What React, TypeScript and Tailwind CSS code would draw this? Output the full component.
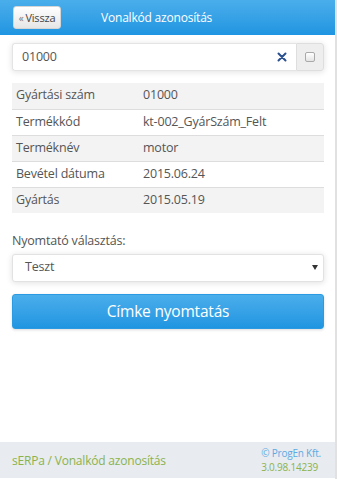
import React from 'react';

const rows: [string, string][] = [
    ['Gyártási szám', '01000'],
    ['Termékkód', 'kt-002_GyárSzám_Felt'],
    ['Terméknév', 'motor'],
    ['Bevétel dátuma', '2015.06.24'],
    ['Gyártás', '2015.05.19'],
];

export default function App() {
    return (
        <div
            className="w-[337px] h-[479px] flex flex-col bg-white border-r-2 border-[#e1e1e1] text-[#555] tracking-[-0.2px]"
            style={{ fontFamily: '"Open Sans", "Noto Sans", sans-serif' }}
        >
            <header className="h-[35px] flex items-center bg-gradient-to-b from-[#4aaeeb] to-[#1e95e1] pl-[13px]">
                <button className="h-[23px] w-[48px] rounded-[3px] border border-[#d5d5d5] bg-gradient-to-b from-white to-[#e6e6e6] text-[11px] text-[#444] flex items-center justify-center leading-none">
                    <span className="text-[10px] mr-[2px] text-[#777]">«</span>Vissza
                </button>
                <h1 className="ml-[40px] text-[12px] text-white font-normal">Vonalkód azonosítás</h1>
            </header>

            <div className="px-[12px] pr-[11px]">
                <div className="mt-[8px] flex h-[28px] rounded-[3px] shadow-[0_1px_6px_rgba(0,0,0,0.12)]">
                    <div className="flex-1 flex items-center bg-white rounded-l-[3px] border border-r-0 border-[#e4e4e4] pl-[9px] pr-[8px]">
                        <span className="flex-1 text-[12.5px] text-[#555]">01000</span>
                        <svg width="10" height="10" viewBox="0 0 10 10" className="mr-[1px]">
                            <path d="M1.5 1.5 L8.5 8.5 M8.5 1.5 L1.5 8.5" stroke="#2b5090" strokeWidth="2" strokeLinecap="round" />
                        </svg>
                    </div>
                    <div className="w-[28px] flex items-center justify-center bg-[#eeeeee] border border-[#dedede] rounded-r-[3px]">
                        <div className="w-[10px] h-[10px] rounded-[2px] border border-[#a9a9a9] bg-gradient-to-b from-white to-[#e4e4e4]" />
                    </div>
                </div>

                <table className="mt-[12px] w-full border-collapse text-[12.5px] text-[#555]">
                    <tbody>
                        {rows.map(([k, v], i) => (
                            <tr key={k} className={`h-[26px] ${i % 2 === 0 ? 'bg-[#f3f3f3]' : 'bg-white'} ${i < rows.length - 1 ? 'border-b border-[#dddddd]' : ''}`}>
                                <td className="pl-[4px] w-[131px]">{k}</td>
                                <td>{v}</td>
                            </tr>
                        ))}
                    </tbody>
                </table>

                <div className="mt-[19px] text-[12.5px] text-[#555]">Nyomtató választás:</div>

                <div className="mt-[3px] h-[28px] flex items-center bg-white rounded-[3px] border border-[#e2e2e2] shadow-[0_1px_6px_rgba(0,0,0,0.12)] pl-[12px] pr-[5px]">
                    <span className="flex-1 text-[12.5px] text-[#555]">Teszt</span>
                    <svg width="6" height="5" viewBox="0 0 6 5">
                        <path d="M0 0 H6 L3 5 Z" fill="#333" />
                    </svg>
                </div>

                <button className="mt-[12px] w-full h-[35px] rounded-[3px] bg-gradient-to-b from-[#4aaeeb] to-[#1e95e1] border border-[#2a9be2] text-white text-[15.5px] shadow-[0_1px_3px_rgba(0,0,0,0.15)]">
                    Címke nyomtatás
                </button>
            </div>

            <footer className="mt-auto mb-[1px] h-[36px] bg-[#e8ebef] flex items-center justify-between pl-[12px] pr-[14px]">
                <span className="text-[12px] text-[#8ab34e] mt-[2px]">sERPa / Vonalkód azonosítás</span>
                <div className="flex flex-col items-start text-[10px] leading-[14px]">
                    <span className="text-[#5baae3]">© ProgEn Kft.</span>
                    <span className="text-[#8ab34e]">3.0.98.14239</span>
                </div>
            </footer>
        </div>
    );
}
